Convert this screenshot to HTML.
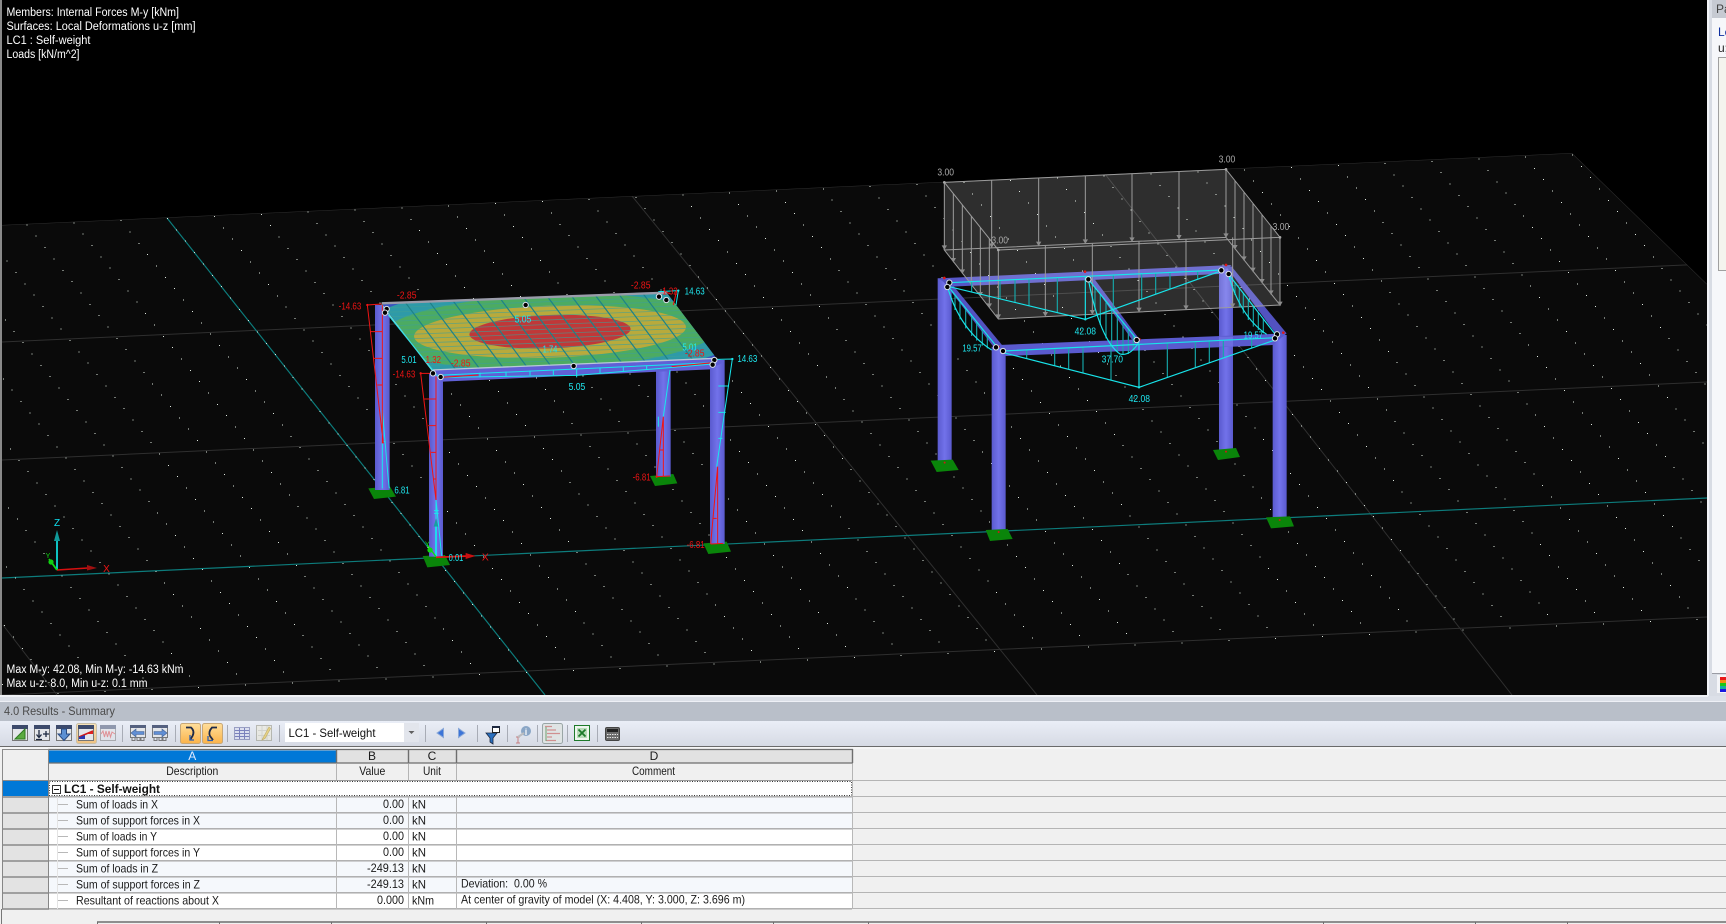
<!DOCTYPE html>
<html><head><meta charset="utf-8"><title>Results - Summary</title>
<style>
html,body{margin:0;padding:0;background:#f0f0f0;width:1726px;height:924px;overflow:hidden}
svg{display:block;position:absolute;left:0;top:0}
text{font-family:"Liberation Sans",sans-serif}
.v{fill:#fff;font-size:11.5px}
.c{fill:#1fe8f0;font-size:31px;text-anchor:middle}
.r{fill:#f01414;font-size:31px;text-anchor:middle}
.g{fill:#a8a8a8;font-size:31px;text-anchor:middle}
.t{fill:#1a1a1a;font-size:12px}
.h{fill:#1a1a1a;font-size:12px;text-anchor:middle}
</style></head><body>
<svg width="1726" height="924" viewBox="0 0 1726 924" xmlns="http://www.w3.org/2000/svg">
<defs>
<clipPath id="pl"><path d="M2 225L1572 153L1707 284V695H2Z"/></clipPath>
<clipPath id="sl"><path d="M155 100L1010 68L1160 265L305 300Z"/></clipPath>
<linearGradient id="col" x1="0" x2="1" y1="0" y2="0"><stop offset="0" stop-color="#5a5ace"/><stop offset=".5" stop-color="#7272ea"/><stop offset="1" stop-color="#5a5ace"/></linearGradient>
<linearGradient id="tb" x1="0" x2="0" y1="0" y2="1"><stop offset="0" stop-color="#eaeef7"/><stop offset="1" stop-color="#d6dae4"/></linearGradient>
<linearGradient id="or" x1="0" x2="0" y1="0" y2="1"><stop offset="0" stop-color="#ffdf9c"/><stop offset="1" stop-color="#fbb34a"/></linearGradient>
<rect id="a1" width="1" height="1" fill="#dfe8df" shape-rendering="crispEdges"/>
<g id="a2"><use href="#a1"/><use href="#a1" x="46.83" y="-2.12"/></g>
<g id="a4"><use href="#a2"/><use href="#a2" x="93.66" y="-4.24"/></g>
<g id="a8"><use href="#a4"/><use href="#a4" x="187.32" y="-8.48"/></g>
<g id="a16"><use href="#a8"/><use href="#a8" x="374.64" y="-16.96"/></g>
<g id="a32"><use href="#a16"/><use href="#a16" x="749.28" y="-33.92"/></g>
<g id="b1"><use href="#a32"/><use href="#a16" x="1498.56" y="-67.84"/><use href="#a4" x="2247.84" y="-101.76"/><use href="#a2" x="2435.16" y="-110.24"/></g>
<g id="b2"><use href="#b1"/><use href="#b1" x="8.97" y="11.35"/></g>
<g id="b4"><use href="#b2"/><use href="#b2" x="17.94" y="22.7"/></g>
<g id="b8"><use href="#b4"/><use href="#b4" x="35.88" y="45.4"/></g>
<g id="b16"><use href="#b8"/><use href="#b8" x="71.76" y="90.8"/></g>
<g id="b32"><use href="#b16"/><use href="#b16" x="143.52" y="181.6"/></g>
<g id="tbl"><rect x=".5" y=".5" width="15" height="15" fill="#e4e6ea" stroke="#777"/><rect x="0" y="0" width="16" height="4" fill="#3c4a6c"/></g>
</defs>

<!-- viewport -->
<rect x="0" y="0" width="1726" height="924" fill="#f0f0f0"/>
<rect x="0" y="0" width="1708" height="696" fill="#000"/>
<rect x="0" y="0" width="2" height="696" fill="#8a8a8a"/>
<path d="M2 225L1572 153L1707 284V695H2Z" fill="#0a0a0a"/>
<g clip-path="url(#pl)">
<g stroke="#2f2f2f" stroke-width="1" fill="none">
<path d="M2 225L1572 153"/><path d="M2 342L1707 264"/><path d="M2 460L1707 382"/><path d="M2 695L1707 617"/>
<path d="M3 625L57 695"/><path d="M632 196L1037 695"/><path d="M1105 174L1512 695"/><path d="M1572 153L1707 284"/>
</g>
<path d="M167 218L545 695M2 578L1707 498" stroke="#0d7c7c" stroke-width="1.2" fill="none"/>
<g transform="translate(-731.6 246.95)"><use href="#b32"/><use href="#b8" x="287.04" y="363.2"/><use href="#b2" x="358.8" y="454"/></g>
</g>

<!-- overlay text -->
<text class="v" x="6.5" y="16" textLength="172.5" lengthAdjust="spacingAndGlyphs">Members: Internal Forces M-y [kNm]</text>
<text class="v" x="6.5" y="30" textLength="189" lengthAdjust="spacingAndGlyphs">Surfaces: Local Deformations u-z [mm]</text>
<text class="v" x="6.5" y="44" textLength="84" lengthAdjust="spacingAndGlyphs">LC1 : Self-weight</text>
<text class="v" x="6.5" y="58" textLength="73" lengthAdjust="spacingAndGlyphs">Loads [kN/m^2]</text>
<text class="v" x="6.5" y="673" textLength="177" lengthAdjust="spacingAndGlyphs">Max M-y: 42.08, Min M-y: -14.63 kNm</text>
<text class="v" x="6.5" y="687" textLength="141" lengthAdjust="spacingAndGlyphs">Max u-z: 8.0, Min u-z: 0.1 mm</text>

<!-- axis triad -->
<path d="M57 570V538" stroke="#10f0f0" stroke-width="1.6"/><path d="M57 530l-3 11h6z" fill="#109a9a"/>
<path d="M57 570L88 568" stroke="#d81010" stroke-width="1.6"/><path d="M97 568l-10-3v5.500z" fill="#a01010"/>
<path d="M57 570L49 559" stroke="#10e010" stroke-width="1.8"/><circle cx="51" cy="562" r="2.600" fill="#10d010"/>
<text x="57" y="526" font-size="10" fill="#10e0f0" text-anchor="middle">Z</text>
<text x="106.500" y="572" font-size="10" fill="#f01414" text-anchor="middle">X</text>
<text x="48" y="558" font-size="7" fill="#10e010" text-anchor="middle">Y</text>

<!-- LEFT FRAME (zoom coordinates) -->
<g transform="translate(330 270) scale(.33333)">
<path d="M115 655L180 650L198 680L132 687Z M278 858L345 855L360 885L292 892Z M960 618L1030 612L1042 640L975 648Z M1120 820L1190 815L1203 845L1135 852Z" fill="#0a850a"/>
<rect x="135" y="105" width="44" height="555" fill="url(#col)"/>
<rect x="978" y="295" width="44" height="325" fill="url(#col)"/>
<rect x="297" y="310" width="42" height="550" fill="url(#col)"/>
<rect x="1140" y="270" width="44" height="552" fill="url(#col)"/>
<path d="M155 103L305 300L339 335L179 140Z" fill="#5c5cd4"/>
<path d="M305 300L1160 265L1184 275L1140 298L339 335Z" fill="#6060d6"/>
<g clip-path="url(#sl)">
<path d="M155 100L1010 68L1160 265L305 300Z" fill="#3a52c0"/>
<ellipse cx="660" cy="185" rx="600" ry="150" transform="rotate(-2 660 185)" fill="#2e9aa8"/>
<ellipse cx="660" cy="185" rx="510" ry="112" transform="rotate(-2 660 185)" fill="#4cab62"/>
<ellipse cx="660" cy="185" rx="408" ry="78" transform="rotate(-2 660 185)" fill="#b8aa3c"/>
<ellipse cx="660" cy="185" rx="242" ry="50" transform="rotate(-2 660 185)" fill="#c03838"/>
<g transform="matrix(855 -32 150 200 155 100)" fill="none">
<path vector-effect="non-scaling-stroke" stroke="#3f9f98" stroke-opacity=".7" stroke-width=".8" d="M0 .067H1M0 .133H1M0 .2H1M0 .267H1M0 .333H1M0 .4H1M0 .467H1M0 .533H1M0 .6H1M0 .667H1M0 .733H1M0 .8H1M0 .867H1M0 .933H1"/>
<path vector-effect="non-scaling-stroke" stroke="#1d8288" stroke-width="1.200" d="M.083 0V1M.167 0V1M.25 0V1M.333 0V1M.417 0V1M.5 0V1M.583 0V1M.667 0V1M.75 0V1M.833 0V1M.917 0V1"/>
</g>
</g>
<path d="M155 100L1010 68" stroke="#9a9caa" stroke-width="7" fill="none"/>
<path d="M305 300L1160 265" stroke="#b8c8d8" stroke-width="4" fill="none"/>
<path d="M155 104L305 300" stroke="#7adada" stroke-width="3" fill="none"/>
<path d="M175 135L320 315" stroke="#30e0e8" stroke-width="3" fill="none"/>
<!-- cyan moment lines -->
<g stroke="#18e8ee" stroke-width="3" fill="none">
<path d="M320 316L1150 278M340 322L740 316L1150 282"/>
<path d="M450 308v14M528 305v14M600 302v14M670 299v16M740 296v26M810 293v16M880 290v14M950 287v12"/>
<path d="M985 65L1045 62L1038 105"/>
<path d="M1160 268L1207 267L1160 590"/>
<path d="M1165 348H1197M1165 427H1187M1165 505H1177"/>
<path d="M1020 300L1000 440"/>
<path d="M157 420L175 630L178 655M157 420V655M165 515H157"/>
<path d="M318 690L335 858M318 690V860"/>
<path d="M312 722H326M312 730H326"/>
<path d="M985 440V470"/>
</g>
<path d="M318 745l-7 25h14z" fill="#15a0a0"/>
<path d="M318 770V860" stroke="#10f0f0" stroke-width="5"/>
<g stroke="#f01414" stroke-width="3" fill="none">
<path d="M155 102L112 105L160 520M120 185H157M130 265H157M142 345H157M157 105V520"/>
<path d="M309 310L272 310L318 690M283 387H318M295 467H318M303 547H318M311 627H318M318 320V690"/>
<path d="M335 322L445 315M1025 290L1150 278"/>
<path d="M1000 440L980 620M990 540H1000M1000 440V620M980 620L1020 618"/>
<path d="M1163 590L1142 822M1150 745H1160M1163 590V822M1142 822L1180 820"/>
<path d="M1000 60L1020 72M1040 62L1030 105"/>
</g>
<path d="M112 105h.01M272 310h.01M980 620h.01" stroke="#f01414" stroke-width="7" stroke-linecap="round"/>
<path d="M1045 62h.01M1207 267h.01" stroke="#18e8ee" stroke-width="7" stroke-linecap="round"/>
<!-- base triad -->
<path d="M318 862L415 858" stroke="#e81010" stroke-width="5"/><path d="M437 858l-30-9v18z" fill="#c81010"/>
<path d="M318 860L292 825" stroke="#10e010" stroke-width="4"/><circle cx="300" cy="840" r="8" fill="#10d810"/>
<text x="292" y="830" font-size="22" fill="#10e010" text-anchor="middle">Y</text>
<!-- joints -->
<g fill="#000" stroke="#d8e0e8" stroke-width="3">
<circle cx="170" cy="117" r="8"/><circle cx="165" cy="128" r="8"/><circle cx="309" cy="310" r="8"/><circle cx="332" cy="321" r="8"/><circle cx="587" cy="105" r="8"/><circle cx="731" cy="288" r="8"/><circle cx="987" cy="80" r="8"/><circle cx="1009" cy="90" r="8"/><circle cx="1153" cy="270" r="8"/><circle cx="1148" cy="284" r="8"/>
</g>
<text class="r" x="230" y="85" textLength="59" lengthAdjust="spacingAndGlyphs">-2.85</text>
<text class="r" x="932" y="55" textLength="59" lengthAdjust="spacingAndGlyphs">-2.85</text>
<text class="r" x="1020" y="73" textLength="46" lengthAdjust="spacingAndGlyphs">1.32</text>
<text class="c" x="1094" y="73" textLength="60" lengthAdjust="spacingAndGlyphs">14.63</text>
<text class="r" x="60" y="118" textLength="68" lengthAdjust="spacingAndGlyphs">-14.63</text>
<text class="c" x="579" y="157" textLength="50" lengthAdjust="spacingAndGlyphs">5.05</text>
<text class="c" x="237" y="279" textLength="46" lengthAdjust="spacingAndGlyphs">5.01</text>
<text class="r" x="310" y="279" textLength="46" lengthAdjust="spacingAndGlyphs">1.32</text>
<text class="r" x="392" y="289" textLength="59" lengthAdjust="spacingAndGlyphs">-2.85</text>
<text class="r" x="222" y="322" textLength="68" lengthAdjust="spacingAndGlyphs">-14.63</text>
<text class="c" x="660" y="247" textLength="44" lengthAdjust="spacingAndGlyphs">1.74</text>
<text class="c" x="1080" y="241" textLength="46" lengthAdjust="spacingAndGlyphs">5.01</text>
<text class="r" x="1094" y="259" textLength="59" lengthAdjust="spacingAndGlyphs">-2.85</text>
<text class="c" x="1252" y="276" textLength="60" lengthAdjust="spacingAndGlyphs">14.63</text>
<text class="c" x="741" y="360" textLength="50" lengthAdjust="spacingAndGlyphs">5.05</text>
<text class="c" x="216" y="670" textLength="46" lengthAdjust="spacingAndGlyphs">6.81</text>
<text class="r" x="935" y="631" textLength="54" lengthAdjust="spacingAndGlyphs">-6.81</text>
<text class="r" x="1097" y="834" textLength="54" lengthAdjust="spacingAndGlyphs">-6.81</text>
<text class="c" x="378" y="873" textLength="44" lengthAdjust="spacingAndGlyphs">0.01</text>
<text class="r" x="466" y="871">X</text>
</g>

<!-- RIGHT FRAME (zoom coordinates) -->
<g transform="translate(900 150) scale(.33333)">
<rect x="113" y="385" width="42" height="555" fill="url(#col)"/>
<rect x="957" y="350" width="42" height="555" fill="url(#col)"/>
<rect x="275" y="590" width="42" height="555" fill="url(#col)"/>
<rect x="1118" y="555" width="42" height="555" fill="url(#col)"/>
<path d="M92 932L158 929L176 960L110 966Z M257 1140L323 1137L338 1167L270 1173Z M939 900L1008 894L1020 921L954 930Z M1098 1102L1170 1099L1182 1129L1113 1135Z" fill="#0a850a"/>
<path d="M134 938h.01M296 1146h.01M978 905h.01M1139 1110h.01" stroke="#d01818" stroke-width="6" stroke-linecap="round"/>
<path d="M113 385L995 345L957 372L155 410Z" fill="#5656c8"/>
<path d="M125 388L150 395L310 590L280 590Z" fill="#5252c0"/>
<path d="M555 370L578 380L720 570L700 575Z" fill="#5252c0"/>
<path d="M975 345L995 350L1160 550L1130 555Z" fill="#5252c0"/>
<path d="M295 585L1160 550L1118 585L317 618Z" fill="#5a5ace"/>
<rect x="957" y="560" width="42" height="30" fill="#6d6de0"/>
<!-- load box -->
<path d="M133 97L978 58L1140 262V465L295 507L133 300Z" fill="#fff" fill-opacity=".15"/>
<g stroke="#9c9c9c" stroke-width="3" fill="none">
<path d="M133 97L978 58L1140 262L295 300ZM133 300L978 262L1140 465L295 507Z"/>
<path d="M133 97V300M978 58V262M1140 262V465M295 300V507"/>
<path d="M275 91V280M416 85V275M556 78V268M696 72V262M837 65V255"/>
<path d="M436 287V487M577 281V480M717 275V473M858 268V466M998 262V460"/>
<path d="M160 131V324M187 165V358M214 199V392M241 233V426M268 267V460"/>
<path d="M1005 92V285M1032 126V319M1059 160V353M1086 194V387M1113 228V421"/>
</g>
<path fill="#8c8c8c" d="M133 300l-8-14h16zM275 294l-8-14h16zM416 289l-8-14h16zM556 282l-8-14h16zM696 276l-8-14h16zM837 269l-8-14h16zM978 264l-8-14h16zM295 507l-8-14h16zM436 500l-8-14h16zM577 494l-8-14h16zM717 487l-8-14h16zM858 480l-8-14h16zM998 474l-8-14h16zM160 338l-8-14h16zM187 372l-8-14h16zM214 406l-8-14h16zM241 440l-8-14h16zM268 474l-8-14h16zM1005 299l-8-14h16zM1032 333l-8-14h16zM1059 367l-8-14h16zM1086 401l-8-14h16zM1113 435l-8-14h16zM1140 469l-8-14h16z"/>
<path d="M133 97h.01M978 58h.01M1140 262h.01M295 300h.01" stroke="#a8a8a8" stroke-width="8" stroke-linecap="round"/>
<!-- diagrams -->
<g stroke="#16a6a8" stroke-width="3.500" fill="none">
<path d="M215 395V426M300 391V446M345 389V457M387 387V467M472 383V488M640 375V478M725 371V448M767 369V433M810 367V417M893 363V388"/>
<path d="M380 600V626M464 595V647M506 593V658M549 591V669M633 587V690M802 579V682M886 575V653M928 573V639M970 571V624M1055 567V594"/>
<path d="M165 435V480M180 453V508M197 474V535M215 497V558M230 515V572M247 536V587M262 555V595"/>
<path d="M585 413V480M601 433V525M618 454V565M635 475V590M652 496V605M669 517V614M685 537V612M700 555V598"/>
<path d="M1005 398V435M1018 414V470M1030 430V490M1045 449V510M1060 468V530M1075 488V540M1090 507V550"/>
</g>
<g stroke="#18e4ea" stroke-width="3.500" fill="none">
<path d="M148 398L965 360M148 410L556 508L965 362M556 379V508"/>
<path d="M310 603L1130 563M310 608L717 712L1125 570M717 583V712"/>
<path d="M143 412Q180 540 275 600M145 410L290 590"/>
<path d="M565 388Q600 570 660 612Q690 620 718 575M565 388L712 570"/>
<path d="M985 372Q1020 500 1100 553M985 372L1125 552"/>
</g>
<path d="M556 508h.01M717 712h.01" stroke="#18e4ea" stroke-width="7" stroke-linecap="round"/>
<path d="M133 384h.01M555 365h.01M978 345h.01M295 590h.01M718 568h.01M1150 548h.01" stroke="#e01818" stroke-width="8" stroke-linecap="round"/>
<g fill="#000" stroke="#d8e0e8" stroke-width="3">
<circle cx="148" cy="398" r="8"/><circle cx="142" cy="411" r="8"/><circle cx="288" cy="592" r="8"/><circle cx="309" cy="603" r="8"/><circle cx="565" cy="388" r="8"/><circle cx="710" cy="570" r="8"/><circle cx="964" cy="361" r="8"/><circle cx="986" cy="372" r="8"/><circle cx="1131" cy="553" r="8"/><circle cx="1125" cy="565" r="8"/>
</g>
<text class="g" x="137" y="76" textLength="50" lengthAdjust="spacingAndGlyphs">3.00</text>
<text class="g" x="981" y="37" textLength="50" lengthAdjust="spacingAndGlyphs">3.00</text>
<text class="g" x="1143" y="240" textLength="50" lengthAdjust="spacingAndGlyphs">3.00</text>
<text class="g" x="299" y="280" textLength="50" lengthAdjust="spacingAndGlyphs">3.00</text>
<text class="c" x="556" y="553" textLength="64" lengthAdjust="spacingAndGlyphs">42.08</text>
<text class="c" x="718" y="756" textLength="64" lengthAdjust="spacingAndGlyphs">42.08</text>
<text class="c" x="216" y="604" textLength="58" lengthAdjust="spacingAndGlyphs">19.57</text>
<text class="c" x="1060" y="565" textLength="58" lengthAdjust="spacingAndGlyphs">19.57</text>
<text class="c" x="637" y="637" textLength="64" lengthAdjust="spacingAndGlyphs">37.70</text>
</g>

<!-- right side panel -->
<rect x="1707" y="0" width="19" height="702" fill="#d8dce4"/>
<rect x="1707" y="0" width="2" height="697" fill="#f2f4f8"/>
<rect x="1712" y="0" width="14" height="18" fill="#c6cad2"/>
<rect x="1712" y="18" width="14" height="655" fill="#f6f7fa"/>
<rect x="1712" y="673" width="14" height="1" fill="#9a9ca4"/>
<text x="1716" y="13" font-size="12" fill="#444">Pa</text>
<text x="1718" y="36" font-size="12" fill="#1030a0">Lc</text>
<text x="1718" y="52" font-size="12" fill="#222">u;</text>
<rect x="1718.500" y="57.500" width="9" height="213" fill="#f4f4ee" stroke="#a0a0a0"/>
<rect x="1717" y="675" width="9" height="18" fill="#f4f5f8"/>
<rect x="1720" y="677" width="6" height="3" fill="#e81818"/><rect x="1720" y="680" width="6" height="3" fill="#f09010"/><rect x="1720" y="683" width="6" height="3" fill="#18c818"/><rect x="1720" y="686" width="6" height="3" fill="#10b0a0"/><rect x="1720" y="689" width="6" height="3" fill="#1818e0"/>

<!-- bottom panel chrome -->
<rect x="0" y="696" width="1726" height="6" fill="#dce0e8"/>
<rect x="0" y="695" width="1708" height="2" fill="#f0f2f6"/>
<rect x="0" y="701" width="1726" height="1" fill="#eef0f6"/>
<rect x="0" y="702" width="1726" height="19" fill="#b9bfc9"/>
<text x="4" y="715" font-size="12" fill="#4a4a4a" textLength="111" lengthAdjust="spacingAndGlyphs">4.0 Results - Summary</text>
<rect x="0" y="721" width="1726" height="25" fill="url(#tb)"/>
<rect x="0" y="746" width="1726" height="1" fill="#6a6a6a"/>
<rect x="0" y="747" width="1726" height="2" fill="#f6f6f6"/>

<!-- toolbar separators -->
<path d="M122.500 725V742M175.500 725V742M227.500 725V742M279.500 725V742M425.500 725V742M477.500 725V742M507.500 725V742M537.500 725V742M567.500 725V742M597.500 725V742" stroke="#a8acb6" stroke-width="1"/>
<!-- toggle buttons -->
<rect x="76.500" y="723.500" width="20" height="20" rx="2" fill="url(#or)" fill-opacity=".65" stroke="#c8bfa8"/>
<rect x="180.500" y="723.500" width="20" height="20" rx="2" fill="url(#or)" stroke="#c8a878"/>
<rect x="202.500" y="723.500" width="20" height="20" rx="2" fill="url(#or)" stroke="#c8a878"/>
<rect x="542.500" y="723.500" width="20" height="20" rx="2" fill="#dfe4e4" stroke="#9aa6a6"/>
<!-- icon 1 -->
<g transform="translate(12 725)"><use href="#tbl"/><path d="M3 14L13 4V14Z" fill="#5aaa40" stroke="#2e7a20"/></g>
<!-- icon 2 -->
<g transform="translate(34 725)"><use href="#tbl"/><path d="M5 5V12M2.500 9.500L5 12.500L7.500 9.500M2 14.500H8M9 9H15M12 6V12" stroke="#1c2840" stroke-width="1.300" fill="none"/></g>
<!-- icon 3 -->
<g transform="translate(56 725)"><use href="#tbl"/><path d="M5.500 4H10.500V9H14L8 15.500L2 9H5.500Z" fill="#5c90d4" stroke="#2a4a80"/></g>
<!-- icon 4 -->
<g transform="translate(78 725)"><use href="#tbl"/><path d="M1 12L15 6" stroke="#d01818" stroke-width="1.500"/><path d="M9 9L15 6V9Z" fill="#e02020"/><path d="M1 12L7 10V14H1Z" fill="#2838b0"/></g>
<!-- icon 5 -->
<g transform="translate(100 725)" opacity=".5"><use href="#tbl"/><path d="M1 9L3 6L4.500 12L6 6L7.500 12L9 6L10.500 12L12 7L15 9" stroke="#e04040" fill="none"/></g>
<!-- icon 6,7 -->
<g transform="translate(130 725)" opacity=".85"><rect x=".5" y=".5" width="15" height="12" fill="#e4e6ea" stroke="#666"/><rect width="16" height="3" fill="#3c4a6c"/><path d="M1 8L6 4V6.500H14V9.500H6V12Z" fill="#4a80d0" stroke="#2a4a80" stroke-width=".6"/><path d="M2 13V15.500H5V13M7 13V15.500H10V13M11 13V15.500H14V13" stroke="#666" fill="none"/></g>
<g transform="translate(152 725)" opacity=".85"><rect x=".5" y=".5" width="15" height="12" fill="#e4e6ea" stroke="#666"/><rect width="16" height="3" fill="#3c4a6c"/><path d="M15 8L10 4V6.500H2V9.500H10V12Z" fill="#4a80d0" stroke="#2a4a80" stroke-width=".6"/><path d="M2 13V15.500H5V13M7 13V15.500H10V13M11 13V15.500H14V13" stroke="#666" fill="none"/></g>
<!-- icon 8,9 -->
<g transform="translate(183 726)" fill="none"><path d="M3 1.500H8Q12 5 9.500 10L7 14" stroke="#1e2a48" stroke-width="1.800"/><path d="M7 9V14H11" stroke="#3060b0" stroke-width="1.300"/></g>
<g transform="translate(205 726)" fill="none"><path d="M12 1.500H7Q3 6 5 10L8 14" stroke="#1e2a48" stroke-width="1.800"/><path d="M3 10V14.500H8" stroke="#3060b0" stroke-width="1.300"/></g>
<!-- icon 10,11 -->
<g transform="translate(234 725)" opacity=".7"><rect x=".5" y="2.500" width="15" height="12" fill="#d8dcf0" stroke="#7a80b0"/><path d="M1 5.500H15M1 8.500H15M1 11.500H15M5.500 3V14M10.500 3V14" stroke="#5058a8"/></g>
<g transform="translate(256 725)" opacity=".6"><rect x=".5" y=".5" width="15" height="15" fill="#eceadc" stroke="#9a9a8a"/><path d="M2 5.500H14M2 10.500H14M6 1V15M11 1V15" stroke="#c8c8b8"/><path d="M7 13L13 2L14.500 3.500L9 13.500L6 15Z" fill="#ecc840" stroke="#b09020" stroke-width=".7"/></g>
<!-- combo -->
<rect x="285" y="723" width="134" height="19" fill="#fff"/>
<rect x="404" y="723" width="15" height="19" fill="#e2e5ec"/>
<path d="M408.500 731H414.500L411.500 734Z" fill="#606060"/>
<text x="288.500" y="737" font-size="12" fill="#111" textLength="87" lengthAdjust="spacingAndGlyphs">LC1 - Self-weight</text>
<!-- nav arrows -->
<path d="M437 733L443.500 728.500V737.500Z" fill="#3c74d8" stroke="#8aa8d8"/>
<path d="M465 733L458.500 728.500V737.500Z" fill="#3c74d8" stroke="#8aa8d8"/>
<!-- filter -->
<path d="M486 733H497L493 738V744L490 742V738Z" fill="#2a70c0" stroke="#1c2840" stroke-width=".8"/>
<rect x="492.500" y="726.500" width="7" height="6" fill="#fff" stroke="#222"/><rect x="492" y="726" width="8" height="2" fill="#1c2840"/>
<!-- info -->
<g opacity=".75"><circle cx="526" cy="731" r="5" fill="#6c90b8"/><text x="526" y="735" font-size="9" font-weight="bold" fill="#fff" text-anchor="middle">i</text><path d="M516 737H520M518 737V743M516 743H520" stroke="#c06060" fill="none"/><path d="M518 737L524 733" stroke="#b0b0b0" stroke-width="2"/></g>
<!-- tree -->
<path d="M545 726.500H552M547 730H556M547 733.500H560M547 737H552M546 740.500H556" stroke="#d09090" stroke-width="1.300"/><path d="M546 727V741" stroke="#70a070"/>
<!-- excel -->
<rect x="574.500" y="725.500" width="15" height="15" fill="#eef6ee" stroke="#1e7a2a"/><path d="M577 728H587V738H577Z" fill="#b8dcb8"/><path d="M578.500 729.500L585.500 736.500M585.500 729.500L578.500 736.500" stroke="#1c7a2a" stroke-width="1.800"/>
<!-- calc -->
<rect x="605.500" y="727.500" width="14" height="13" rx="1.500" fill="#6c6c6c" stroke="#444"/><rect x="607" y="729" width="11" height="3" fill="#222"/><path d="M607 734.500H618M607 737.500H618" stroke="#e8e8e8" stroke-dasharray="1.500 1"/>

<!-- TABLE -->
<rect x="0" y="749" width="1726" height="175" fill="#f0f0f0"/>
<!-- lines to the right -->
<path d="M852 780.500H1726M852 796.500H1726M852 812.500H1726M852 828.500H1726M852 844.500H1726M852 860.500H1726M852 876.500H1726M852 892.500H1726M852 908.500H1726" stroke="#b4b4b4" stroke-width="1"/>
<path d="M852.500 750V763" stroke="#b4b4b4"/>
<!-- row header top -->
<rect x="2.500" y="749.500" width="46" height="31" fill="#efefef" stroke="#8a8a8a"/>
<!-- letter row -->
<rect x="48" y="749" width="804" height="14" fill="#e2e2e2"/>
<rect x="49" y="750.500" width="287" height="12" fill="#0078d7"/>
<path d="M48 749.500H853M48 763H853" stroke="#6e6e6e" stroke-width="1.200"/>
<path d="M336.500 749V763M408.500 749V763M456.500 749V763M852.500 749V763" stroke="#6e6e6e" stroke-width="1.400"/>
<text class="h" x="192.300" y="760" style="fill:#dfeaff">A</text>
<text class="h" x="372" y="760">B</text>
<text class="h" x="432" y="760">C</text>
<text class="h" x="654" y="760">D</text>
<!-- sub-header -->
<rect x="48" y="764" width="804" height="16" fill="#f0f0f0"/>
<path d="M336.500 764V780M408.500 764V780M456.500 764V780M852.500 764V780" stroke="#b4b4b4"/>
<path d="M48 780.500H852" stroke="#9a9a9a"/>
<text class="h" x="192.300" y="775" textLength="52" lengthAdjust="spacingAndGlyphs">Description</text>
<text class="h" x="372.300" y="775" textLength="26" lengthAdjust="spacingAndGlyphs">Value</text>
<text class="h" x="432" y="775" textLength="18" lengthAdjust="spacingAndGlyphs">Unit</text>
<text class="h" x="653.500" y="775" textLength="43" lengthAdjust="spacingAndGlyphs">Comment</text>
<!-- LC1 row -->
<rect x="3" y="781" width="45" height="15" fill="#0078d7"/>
<rect x="49" y="781" width="803" height="15" fill="#fff"/>
<rect x="49.500" y="781.500" width="802" height="14" fill="none" stroke="#333" stroke-width=".9" stroke-dasharray="1 1.500"/>
<rect x="52.500" y="785.500" width="8" height="8" fill="#fff" stroke="#333"/><path d="M54 789.500H59" stroke="#111"/>
<text x="64" y="793" font-size="12" font-weight="bold" fill="#111" textLength="96" lengthAdjust="spacingAndGlyphs">LC1 - Self-weight</text>
<!-- data rows bg -->
<rect x="49" y="797" width="803" height="32" fill="#f5f8fc"/>
<rect x="49" y="829" width="803" height="32" fill="#fff"/>
<rect x="49" y="861" width="803" height="32" fill="#f5f8fc"/>
<rect x="49" y="893" width="803" height="16" fill="#fff"/>
<!-- row headers -->
<g fill="#e3e3e3"><rect x="3" y="798" width="45" height="14"/><rect x="3" y="814" width="45" height="14"/><rect x="3" y="830" width="45" height="14"/><rect x="3" y="846" width="45" height="14"/><rect x="3" y="862" width="45" height="14"/><rect x="3" y="878" width="45" height="14"/><rect x="3" y="894" width="45" height="14"/></g>
<path d="M2 797H49M2 813H49M2 829H49M2 845H49M2 861H49M2 877H49M2 893H49M2 909H49" stroke="#868686" stroke-width="1.500"/>
<path d="M49 796.800H852M49 812.800H852M49 828.800H852M49 844.800H852M49 860.800H852M49 876.800H852M49 892.800H852M49 908.800H852" stroke="#a6a6a6" stroke-width="1.400"/>
<path d="M2.500 781V909M48.500 749V909" stroke="#868686"/>
<path d="M336.500 797V909M408.500 797V909M456.500 797V909M852.500 781V909" stroke="#b8b8b8"/>
<!-- tree dashes -->
<path d="M57.500 797V909" stroke="#e4e4e4"/>
<path d="M58 804.500H68M58 820.500H68M58 836.500H68M58 852.500H68M58 868.500H68M58 884.500H68M58 900.500H68" stroke="#b8b8b8"/>
<!-- cells -->
<g class="rows">
<text class="t" x="76" y="808.500" textLength="82" lengthAdjust="spacingAndGlyphs">Sum of loads in X</text>
<text class="t" x="76" y="824.500" textLength="124" lengthAdjust="spacingAndGlyphs">Sum of support forces in X</text>
<text class="t" x="76" y="840.500" textLength="81" lengthAdjust="spacingAndGlyphs">Sum of loads in Y</text>
<text class="t" x="76" y="856.500" textLength="124" lengthAdjust="spacingAndGlyphs">Sum of support forces in Y</text>
<text class="t" x="76" y="872.500" textLength="82" lengthAdjust="spacingAndGlyphs">Sum of loads in Z</text>
<text class="t" x="76" y="888.500" textLength="124" lengthAdjust="spacingAndGlyphs">Sum of support forces in Z</text>
<text class="t" x="76" y="904.500" textLength="143" lengthAdjust="spacingAndGlyphs">Resultant of reactions about X</text>
<text class="t" x="383" y="808" textLength="21" lengthAdjust="spacingAndGlyphs">0.00</text>
<text class="t" x="383" y="824" textLength="21" lengthAdjust="spacingAndGlyphs">0.00</text>
<text class="t" x="383" y="840" textLength="21" lengthAdjust="spacingAndGlyphs">0.00</text>
<text class="t" x="383" y="856" textLength="21" lengthAdjust="spacingAndGlyphs">0.00</text>
<text class="t" x="367" y="872" textLength="37" lengthAdjust="spacingAndGlyphs">-249.13</text>
<text class="t" x="367" y="888" textLength="37" lengthAdjust="spacingAndGlyphs">-249.13</text>
<text class="t" x="377" y="904" textLength="27" lengthAdjust="spacingAndGlyphs">0.000</text>
<text class="t" x="412" y="808.500" textLength="14" lengthAdjust="spacingAndGlyphs">kN</text>
<text class="t" x="412" y="824.500" textLength="14" lengthAdjust="spacingAndGlyphs">kN</text>
<text class="t" x="412" y="840.500" textLength="14" lengthAdjust="spacingAndGlyphs">kN</text>
<text class="t" x="412" y="856.500" textLength="14" lengthAdjust="spacingAndGlyphs">kN</text>
<text class="t" x="412" y="872.500" textLength="14" lengthAdjust="spacingAndGlyphs">kN</text>
<text class="t" x="412" y="888.500" textLength="14" lengthAdjust="spacingAndGlyphs">kN</text>
<text class="t" x="412" y="904.500" textLength="22" lengthAdjust="spacingAndGlyphs">kNm</text>
<text class="t" x="461" y="887.500" textLength="86" lengthAdjust="spacingAndGlyphs" xml:space="preserve">Deviation:  0.00 %</text>
<text class="t" x="461" y="903.500" textLength="284" lengthAdjust="spacingAndGlyphs">At center of gravity of model (X: 4.408, Y: 3.000, Z: 3.696 m)</text>
</g>
<!-- bottom strip -->
<path d="M1.500 909V924" stroke="#777"/>
<path d="M97 922H1726" stroke="#6e6e6e" stroke-width="1.600"/>
<path d="M97.500 922V924M219.500 922V924M331.500 922V924M486.500 922V924M641.500 922V924M773.500 922V924M868.500 922V924M1323.500 922V924M1475.500 922V924M1567.500 922V924" stroke="#6e6e6e"/>
</svg>
</body></html>
